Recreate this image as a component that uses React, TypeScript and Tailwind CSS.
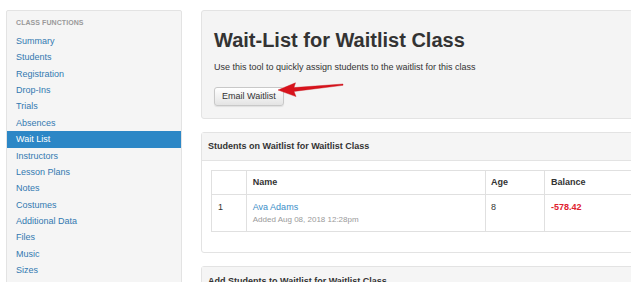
const navItems = [
  'Summary',
  'Students',
  'Registration',
  'Drop-Ins',
  'Trials',
  'Absences',
  'Wait List',
  'Instructors',
  'Lesson Plans',
  'Notes',
  'Costumes',
  'Additional Data',
  'Files',
  'Music',
  'Sizes',
  'Reports',
]

function Sidebar() {
  return (
    <aside className="mt-[10px] ml-[6px] w-[176px] shrink-0 self-start rounded-[2px] border border-[#e3e3e3] bg-[#f5f5f5] pt-[7px] pb-6">
      <p className="pl-[9px] text-[7px] font-bold uppercase leading-[10px] tracking-[0.01em] text-[#9a9a9a]">
        Class Functions
      </p>
      <ul className="mt-[5px]">
        {navItems.map((item) => (
          <li
            key={item}
            className={`pl-[9px] text-[9px] leading-[16.36px] ${
              item === 'Wait List' ? 'bg-[#2c87c6] text-white' : 'text-[#3379b1]'
            }`}
          >
            {item}
          </li>
        ))}
      </ul>
    </aside>
  )
}

function Arrow() {
  return (
    <svg
      className="pointer-events-none absolute left-[59px] top-[-9px]"
      width="75"
      height="28"
      viewBox="0 0 75 28"
    >
      <polygon
        points="70,11 21,14.6 22.5,9.8 5,17 23,23.6 21,18.4 70,12.3"
        fill="#d8131c"
        stroke="#c40f17"
        strokeWidth="0.4"
        strokeLinejoin="round"
      />
    </svg>
  )
}

function HeaderPanel() {
  return (
    <section className="rounded-[3px] border border-[#e3e3e3] bg-[#f4f4f4] px-[12px] pt-[17px] pb-[12px]">
      <h1 className="text-[20px] font-bold leading-[24px] text-[#333]">Wait-List for Waitlist Class</h1>
      <p className="mt-[9px] text-[9px] leading-[12px] text-[#333]">
        Use this tool to quickly assign students to the waitlist for this class
      </p>
      <div className="relative mt-[9px] w-fit">
        <button
          type="button"
          className="h-[19px] rounded-[3px] border border-[#c8c8c8] bg-gradient-to-b from-white to-[#e4e4e4] px-[7px] text-[9px] leading-[17px] text-[#333] shadow-[0_1px_1px_rgba(0,0,0,0.08)]"
        >
          Email Waitlist
        </button>
        <Arrow />
      </div>
    </section>
  )
}

function StudentsPanel() {
  return (
    <section className="mt-[13px] rounded-[3px] border border-[#e3e3e3] bg-white">
      <div className="h-[28px] border-b border-[#e3e3e3] bg-[#f5f5f5] pl-[6px] text-[9px] font-bold leading-[27px] text-[#333]">
        Students on Waitlist for Waitlist Class
      </div>
      <div className="pt-[9px] pr-0 pb-[20px] pl-[9px]">
        <table className="border-collapse text-[9px] text-[#333]">
          <thead>
            <tr className="h-[24px]">
              <th className="w-[36px] border border-[#e0e0e0]" />
              <th className="w-[250px] border border-[#e0e0e0] pl-[6px] text-left font-bold">Name</th>
              <th className="w-[61px] border border-[#e0e0e0] pl-[5px] text-left font-bold">Age</th>
              <th className="w-[140px] border border-[#e0e0e0] pl-[6px] text-left font-bold">Balance</th>
            </tr>
          </thead>
          <tbody>
            <tr className="align-top">
              <td className="border border-[#e0e0e0] pt-[6px] pb-[6px] pl-[6px] leading-[12px]">1</td>
              <td className="border border-[#e0e0e0] pt-[6px] pb-[6px] pl-[6px] leading-[12px]">
                <div className="text-[#3a8ec8]">Ava Adams</div>
                <div className="mt-[2px] text-[8px] leading-[10px] text-[#9a9a9a]">Added Aug 08, 2018 12:28pm</div>
              </td>
              <td className="border border-[#e0e0e0] pt-[6px] pl-[5px] leading-[12px]">8</td>
              <td className="border border-[#e0e0e0] pt-[6px] pl-[6px] leading-[12px] font-bold text-[#e0202e]">
                -578.42
              </td>
            </tr>
          </tbody>
        </table>
      </div>
    </section>
  )
}

function AddPanel() {
  return (
    <section className="mt-[13px] rounded-[3px] border border-[#e3e3e3] bg-white">
      <div className="h-[28px] border-b border-[#e3e3e3] bg-[#f5f5f5] pl-[6px] text-[9px] font-bold leading-[28px] text-[#333]">
        Add Students to Waitlist for Waitlist Class
      </div>
      <div className="h-[60px]" />
    </section>
  )
}

export default function App() {
  return (
    <div
      className="flex h-[282px] w-[631px] overflow-hidden bg-white"
      style={{ fontFamily: '"Liberation Sans", Arial, sans-serif' }}
    >
      <Sidebar />
      <main className="mt-[10px] ml-[19px] w-[480px] shrink-0">
        <HeaderPanel />
        <StudentsPanel />
        <AddPanel />
      </main>
    </div>
  )
}
